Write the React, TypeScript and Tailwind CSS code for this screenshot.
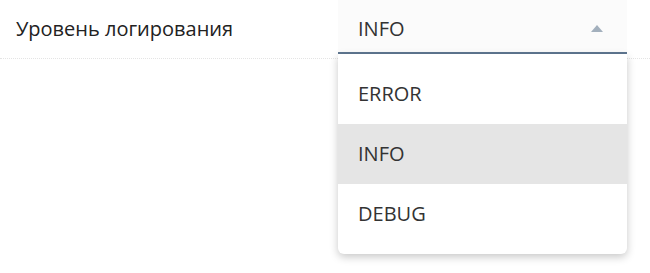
const levels = ['ERROR', 'INFO', 'DEBUG'];

export default function App() {
  const selected = 'INFO';

  return (
    <div
      className="h-[273px] w-[650px] overflow-hidden bg-white text-[#222]"
      style={{ fontFamily: '"Open Sans", "Noto Sans", sans-serif' }}
    >
      <div className="flex h-[59px] items-start border-b border-dotted border-[#e4e4e4] pl-4">
        <div className="flex h-[58px] w-[322px] items-center text-[20px] text-[#222]">
          Уровень логирования
        </div>
        <div className="relative w-[289px]">
          <div className="flex h-[54px] items-center justify-between border-b-2 border-[#5f7791] bg-[#fbfbfb] pl-5 pr-6 pt-[5px]">
            <span className="text-[20px] text-[#333]">{selected}</span>
            <svg width="12" height="7" viewBox="0 0 12 7">
              <path d="M0 7 L6 0 L12 7 Z" fill="#a3b0bd" />
            </svg>
          </div>
          <ul className="absolute left-0 top-[54px] z-10 w-full rounded-b-md bg-white py-[10px] shadow-[0_3px_8px_rgba(0,0,0,0.22)]">
            {levels.map((level) => (
              <li
                key={level}
                className={
                  'flex h-[60px] items-center pl-5 text-[20px] text-[#333] ' +
                  (level === selected ? 'bg-[#e5e5e5]' : '')
                }
              >
                {level}
              </li>
            ))}
          </ul>
        </div>
      </div>
    </div>
  );
}
